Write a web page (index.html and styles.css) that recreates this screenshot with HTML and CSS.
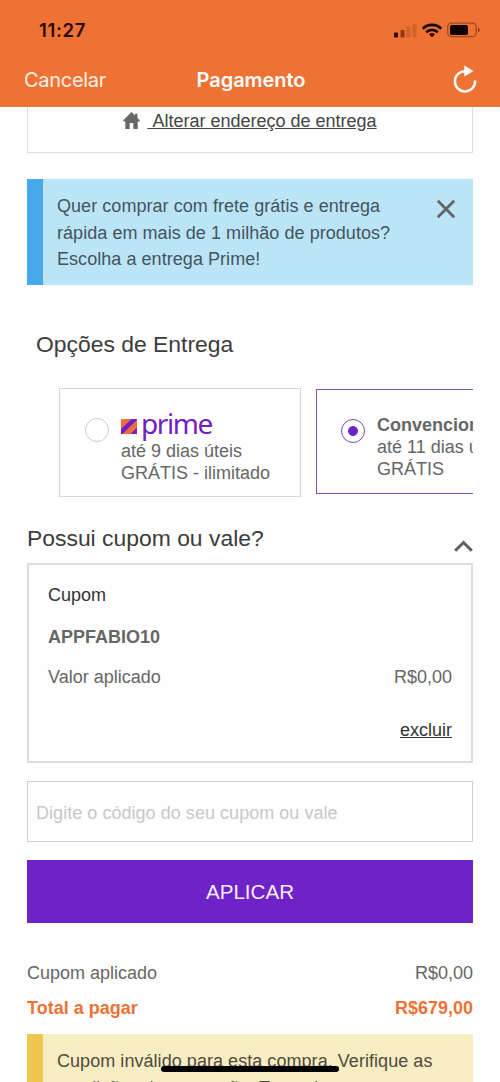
FILE: index.html
```html
<!DOCTYPE html>
<html lang="pt-BR">
<head>
<meta charset="utf-8">
<title>Pagamento</title>
<link rel="stylesheet" href="styles.css">
</head>
<body>
<div class="screen">
  <header class="header">
    <div class="status">
      <span class="time">11:27</span>
      <svg class="status-icons" width="88" height="18" viewBox="0 0 88 18">
        <rect x="1" y="10.5" width="4" height="5" rx=".8" fill="#310800"/>
        <rect x="7.500" y="8" width="4" height="7.500" rx=".8" fill="#8f3b12"/>
        <rect x="13.500" y="4.500" width="4" height="11" rx=".8" fill="#cf6229"/>
        <rect x="19.500" y="2" width="4" height="13.500" rx=".8" fill="#cf6229"/>
        <g fill="none" stroke="#1a0500" stroke-width="2.700">
          <path d="M29.800 6.700a13 13 0 0 1 18.400 0"/>
          <path d="M33.200 10.300a8.200 8.200 0 0 1 11.600 0"/>
        </g>
        <path d="M36 12.300a4.400 4.400 0 0 1 6 0l-3 3.200z" fill="#3a0a02"/>
        <rect x="54.700" y="1.200" width="28.500" height="13.500" rx="4" fill="none" stroke="#a2481b" stroke-width="1.300"/>
        <rect x="57" y="3" width="18" height="10" rx="1.800" fill="#0d0100"/>
        <path d="M85 6c2.200.6 2.200 3.400 0 4z" fill="#8a3510"/>
      </svg>
    </div>
    <div class="nav">
      <span class="cancel">Cancelar</span>
      <span class="title">Pagamento</span>
      <svg class="reload" width="26" height="30" viewBox="0 0 26 30">
        <path d="M13.500 6.200A10.100 10.100 0 1 0 23.100 15.500" fill="none" stroke="#fff" stroke-width="2.500"/>
        <path d="M12.300.5L21.500 6.100 12.300 11.500z" fill="#fff"/>
      </svg>
    </div>
  </header>

  <main class="content">
    <div class="address">
      <svg width="17" height="18" viewBox="0 0 17 18"><path d="M8.500 0L.3 8.200v1.300h2V17h4.400v-6h3.600v6h4.400V9.500h2V8.200L14.500 6V1.700H12v1.800z" fill="#666"/></svg>
      <a class="address-link">&nbsp;Alterar endereço de entrega</a>
    </div>

    <div class="alert alert-info">
      <p class="alert-text">Quer comprar com frete grátis e entrega<br>rápida em mais de 1 milhão de produtos?<br>Escolha a entrega Prime!</p>
      <svg class="close" width="20" height="20" viewBox="0 0 20 20"><path d="M1.800 1.800l16.400 16.400M18.200 1.800L1.800 18.200" fill="none" stroke="#626468" stroke-width="2.800"/></svg>
    </div>

    <h2 class="heading delivery-heading">Opções de Entrega</h2>

    <div class="options">
      <div class="option">
        <span class="radio"></span>
        <div class="option-text">
          <div class="prime">
            <svg width="16" height="15" viewBox="0 0 16 15">
              <rect width="16" height="15" fill="#ef6e3c"/>
              <path d="M0 10L10.500 0H16v1L1.500 15H0zM9.500 15L16 8.500V15z" fill="#7020c4"/>
              <path d="M0 0h5L0 4.500z" fill="#ef6e3c"/>
            </svg>
            <span class="prime-name">prime</span>
          </div>
          <div>até 9 dias úteis</div>
          <div>GRÁTIS - ilimitado</div>
        </div>
      </div>
      <div class="option option-selected">
        <span class="radio radio-on"></span>
        <div class="option-text">
          <div class="option-name">Convencional</div>
          <div>até 11 dias úteis</div>
          <div>GRÁTIS</div>
        </div>
      </div>
    </div>

    <div class="coupon-heading">
      <h2 class="heading">Possui cupom ou vale?</h2>
      <svg class="chevron" width="19" height="12" viewBox="0 0 19 12"><path d="M1.200 10.700l8.300-8.200 8.300 8.200" fill="none" stroke="#5e5e5e" stroke-width="3"/></svg>
    </div>

    <section class="coupon">
      <div class="coupon-label">Cupom</div>
      <div class="coupon-code">APPFABIO10</div>
      <div class="row"><span>Valor aplicado</span><span>R$0,00</span></div>
      <a class="remove">excluir</a>
    </section>

    <input class="code-input" type="text" placeholder="Digite o código do seu cupom ou vale">
    <button class="apply">APLICAR</button>

    <div class="row summary">
      <span>Cupom aplicado</span><span>R$0,00</span>
    </div>
    <div class="row total">
      <span>Total a pagar</span><span>R$679,00</span>
    </div>

    <div class="alert alert-warning">
      <p class="alert-text">Cupom inválido para esta compra. Verifique as<br>condições da promoção. Tente de</p>
    </div>
  </main>
  <div class="home-indicator"></div>
</div>
</body>
</html>
```

FILE: styles.css
```css
* { box-sizing: border-box; }

body {
  margin: 0;
  background: #fefefe;
  color: #666;
  font: 18px/22px "Liberation Sans", Arial, sans-serif;
}

.screen {
  position: relative;
  width: 500px;
  height: 1082px;
  overflow: hidden;
}

.header {
  height: 107px;
  background: #ef7235;
  color: #fff;
  font-family: Inter, "Liberation Sans", sans-serif;
}

.status {
  display: flex;
  justify-content: space-between;
  height: 54px;
  padding: 18px 19px 0 39px;
}

.time {
  color: #2b0900;
  font-size: 18.500px;
  font-weight: 600;
  line-height: 24px;
  letter-spacing: 0.65px;
}

.status-icons { margin-top: 4px; }

.nav {
  display: grid;
  grid-template-columns: 1fr auto 1fr;
  align-items: center;
  height: 52px;
  padding: 0 22px 0 24px;
  font-size: 20px;
}

.cancel { letter-spacing: -0.3px; color: #fff0e2; }
.title { font-weight: 600; letter-spacing: -0.05px; }
.reload { justify-self: end; }

.content { padding: 0 27px; }

.address {
  display: flex;
  justify-content: center;
  height: 46px;
  padding-top: 3px;
  border: solid #ddd;
  border-width: 0 1px 1px;
}

.address svg { margin: 2px 7px 0 0; }

.address-link {
  color: #444;
  text-decoration: underline;
}

.alert {
  display: flex;
  justify-content: space-between;
  height: 106px;
  border-left: 16px solid;
}

.alert-text {
  margin: 0;
  padding: 14px 0 0 14px;
  letter-spacing: 0.05px;
  line-height: 26.600px;
  white-space: nowrap;
}

.alert-info {
  margin-top: 26px;
  border-color: #47a9e9;
  background: #bbe4f6;
  color: #43555f;
}

.close { margin: 20px 17px 0 0; }

.heading {
  margin: 0;
  color: #3c3c3c;
  font-size: 22.900px;
  font-weight: 400;
  line-height: 28px;
}

.delivery-heading { margin: 45px 0 0 9px; }

.options {
  display: flex;
  gap: 15px;
  margin-top: 30px;
  padding-left: 32px;
  overflow: hidden;
}

.option {
  display: flex;
  flex: 0 0 242px;
  height: 109px;
  padding: 24px 0 0 25px;
  border: 1px solid #d6d6d6;
}

.option-selected {
  height: 105px;
  margin-top: 1px;
  padding: 24px 0 0 24px;
  border-color: #8453b0;
}

.radio {
  flex: none;
  width: 24px;
  height: 24px;
  margin: 5px 12px 0 0;
  border: 1px solid #ccc;
  border-radius: 50%;
}

.radio-on {
  border-color: #7650a8;
  background: radial-gradient(circle, #6d24c9 4.500px, transparent 5.300px);
}

.option-text { white-space: nowrap; }
.option-name { font-weight: 700; }

.prime {
  display: flex;
  gap: 4px;
  height: 27px;
  color: #7020c4;
}

.prime svg { margin-top: 6px; }

.prime-name {
  font-family: "Noto Sans", sans-serif;
  font-size: 28px;
  line-height: 21px;
  letter-spacing: -1.400px;
}

.coupon-heading {
  display: flex;
  justify-content: space-between;
  height: 39px;
  margin-top: 27px;
}

.chevron { margin-top: 16px; }

.coupon {
  display: flex;
  flex-direction: column;
  height: 200px;
  padding: 19px 19px 0;
  border: 2px solid #ddd;
}

.coupon-label { color: #333; }
.coupon-code { margin: 20px 0 18px; font-weight: 700; }

.row {
  display: flex;
  justify-content: space-between;
}

.remove {
  align-self: flex-end;
  margin-top: 31px;
  color: #333;
  text-decoration: underline;
}

.code-input {
  display: block;
  width: 100%;
  height: 61px;
  margin: 18px 0;
  padding: 3px 8px 0;
  border: 1px solid #d0d0d0;
  background: #fefefe;
  font: inherit;
  letter-spacing: 0.04px;
}

.code-input::placeholder { color: #c8c8c8; }

.apply {
  display: block;
  width: 100%;
  height: 63px;
  padding: 0;
  border: 0;
  background: #6e23c9;
  color: #f9edff;
  font: 20.600px "Liberation Sans", Arial, sans-serif;
}

.summary { margin-top: 39px; }

.total {
  margin-top: 13px;
  color: #ef7235;
  font-weight: 700;
}

.alert-warning {
  margin-top: 15px;
  border-color: #edc750;
  background: #f6edc3;
  color: #514b3d;
}

.home-indicator {
  position: absolute;
  bottom: 10px;
  left: 161px;
  width: 178px;
  height: 6px;
  border-radius: 3px;
  background: #000;
}
```
